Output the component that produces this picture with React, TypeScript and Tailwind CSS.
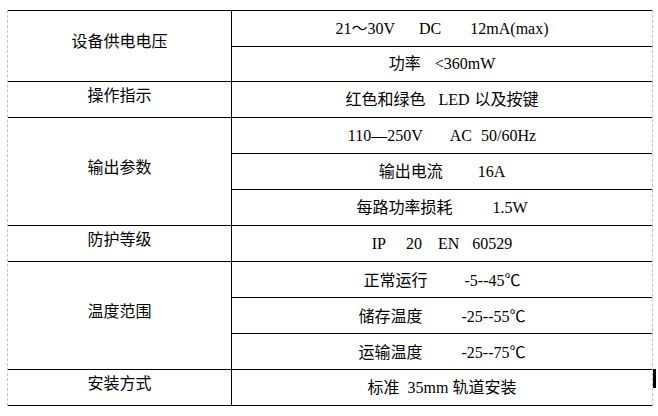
type Seg = [string, number];

type Group = {
  label: string;
  items: Seg[][];
};

const groups: Group[] = [
  {
    label: "设备供电电压",
    items: [
      [["21～30V", 0], ["DC", 24], ["12mA(max)", 29]],
      [["功率", 0], ["<360mW", 14]],
    ],
  },
  {
    label: "操作指示",
    items: [[["红色和绿色", 0], ["LED", 13], ["以及按键", 5]]],
  },
  {
    label: "输出参数",
    items: [
      [["110—250V", 0], ["AC", 27], ["50/60Hz", 9]],
      [["输出电流", 0], ["16A", 35]],
      [["每路功率损耗", 0], ["1.5W", 40]],
    ],
  },
  {
    label: "防护等级",
    items: [[["IP", 0], ["20", 20], ["EN", 16], ["60529", 13]]],
  },
  {
    label: "温度范围",
    items: [
      [["正常运行", 0], ["-5--45", 37], ["℃", 0]],
      [["储存温度", 0], ["-25--55", 39], ["℃", 0]],
      [["运输温度", 0], ["-25--75", 39], ["℃", 0]],
    ],
  },
  {
    label: "安装方式",
    items: [[["标准", 0], ["35mm", 8], ["轨道安装", 4]]],
  },
];

const Cell = ({ segs, short }: { segs: Seg[]; short: boolean }) => (
  <div
    className={`flex items-center justify-center border-b border-black ${
      short ? "h-[35px]" : "h-[36px]"
    }`}
  >
    <span className="whitespace-pre leading-none">
      {segs.map(([text, gap], i) => (
        <span
          key={i}
          className={text === "℃" ? "font-['Noto_Sans_CJK_SC',sans-serif]" : ""}
          style={{ marginLeft: gap }}
        >
          {text}
        </span>
      ))}
    </span>
  </div>
);

export default function App() {
  let rowNo = 0;

  return (
    <div className="relative h-[416px] w-[658px] bg-white text-black">
      <div className="ml-[7px] pt-[10px]">
        <div className="w-[646px] border-x border-dashed border-[#c0c0c0]">
          <div className="border-t border-black text-[16px] font-['Liberation_Serif','Noto_Sans_CJK_SC',serif]">
            {groups.map((g) => (
              <div key={g.label} className="flex">
                <div className="flex w-[224px] shrink-0 items-center justify-center border-r border-b border-black pb-[12px] font-['Noto_Sans_CJK_SC',sans-serif] leading-none">
                  {g.label}
                </div>
                <div className="flex-1">
                  {g.items.map((segs, i) => {
                    const short = rowNo === 1;
                    rowNo += 1;
                    return <Cell key={i} segs={segs} short={short} />;
                  })}
                </div>
              </div>
            ))}
          </div>
        </div>
      </div>

      {/* text cursor */}
      <div className="absolute left-[653px] top-[369px] h-[19px] w-[3px] bg-black" />
    </div>
  );
}
